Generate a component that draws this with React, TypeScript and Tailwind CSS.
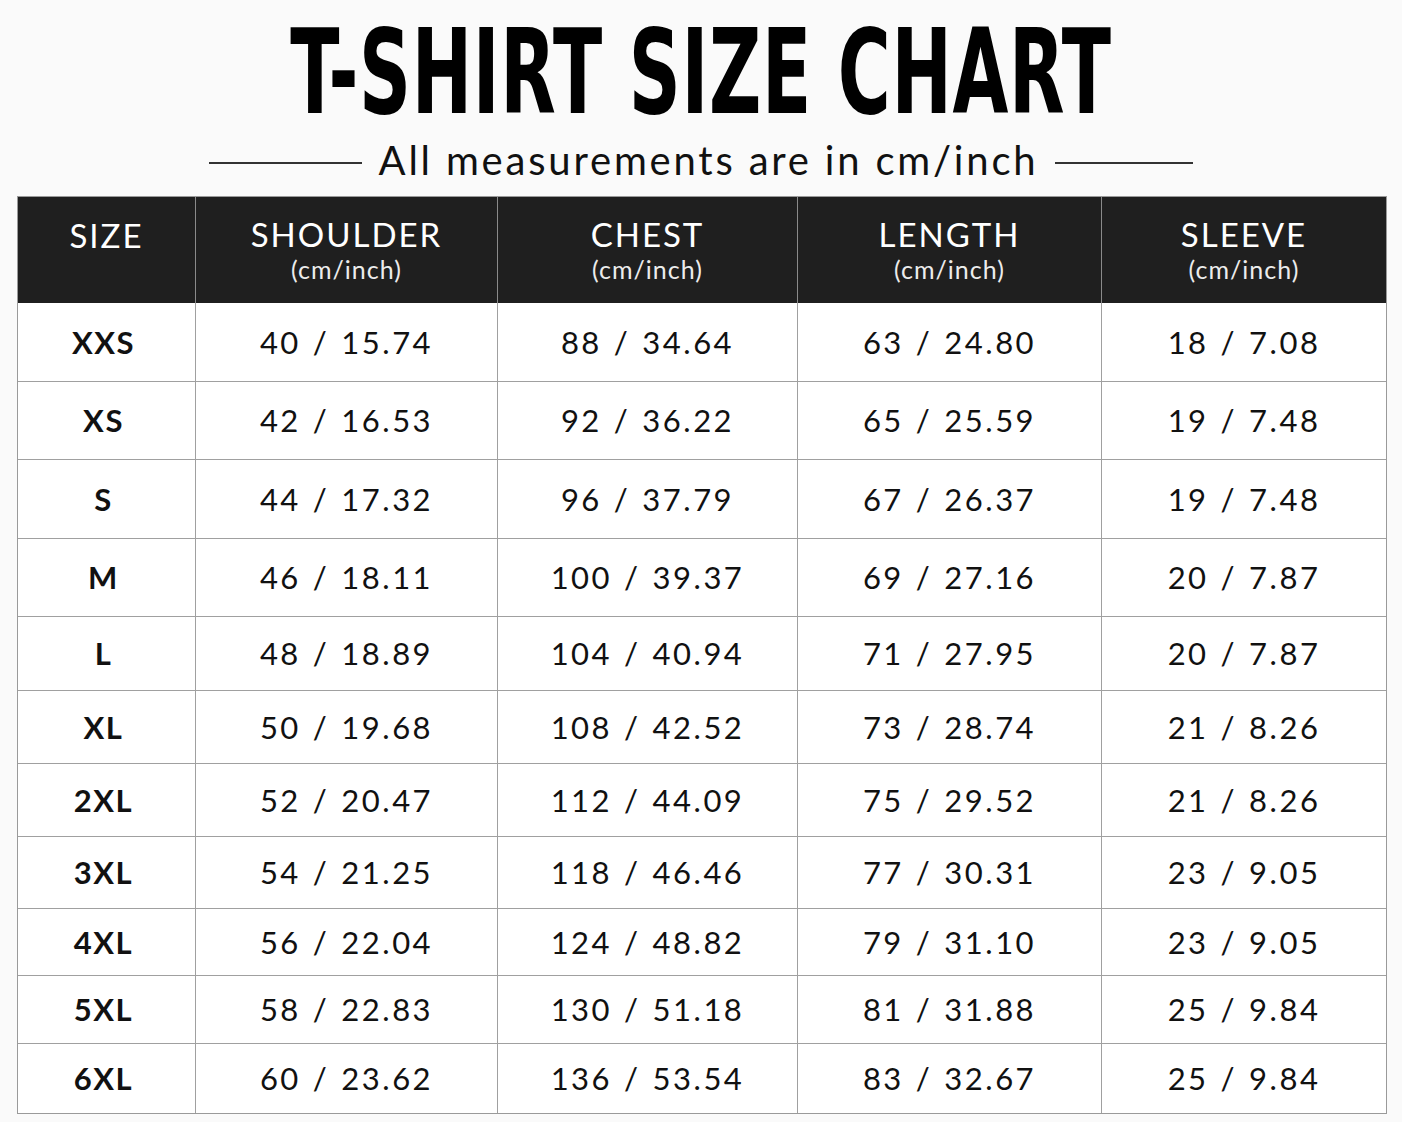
import React from "react";

type SizeRow = {
  size: string;
  shoulder: string;
  chest: string;
  length: string;
  sleeve: string;
  h: string;
};

const rows: SizeRow[] = [
  { size: "XXS", shoulder: "40 / 15.74", chest: "88 / 34.64", length: "63 / 24.80", sleeve: "18 / 7.08", h: "h-[79px]" },
  { size: "XS", shoulder: "42 / 16.53", chest: "92 / 36.22", length: "65 / 25.59", sleeve: "19 / 7.48", h: "h-[78px]" },
  { size: "S", shoulder: "44 / 17.32", chest: "96 / 37.79", length: "67 / 26.37", sleeve: "19 / 7.48", h: "h-[79px]" },
  { size: "M", shoulder: "46 / 18.11", chest: "100 / 39.37", length: "69 / 27.16", sleeve: "20 / 7.87", h: "h-[78px]" },
  { size: "L", shoulder: "48 / 18.89", chest: "104 / 40.94", length: "71 / 27.95", sleeve: "20 / 7.87", h: "h-[74px]" },
  { size: "XL", shoulder: "50 / 19.68", chest: "108 / 42.52", length: "73 / 28.74", sleeve: "21 / 8.26", h: "h-[73px]" },
  { size: "2XL", shoulder: "52 / 20.47", chest: "112 / 44.09", length: "75 / 29.52", sleeve: "21 / 8.26", h: "h-[73px]" },
  { size: "3XL", shoulder: "54 / 21.25", chest: "118 / 46.46", length: "77 / 30.31", sleeve: "23 / 9.05", h: "h-[72px]" },
  { size: "4XL", shoulder: "56 / 22.04", chest: "124 / 48.82", length: "79 / 31.10", sleeve: "23 / 9.05", h: "h-[67px]" },
  { size: "5XL", shoulder: "58 / 22.83", chest: "130 / 51.18", length: "81 / 31.88", sleeve: "25 / 9.84", h: "h-[68px]" },
  { size: "6XL", shoulder: "60 / 23.62", chest: "136 / 53.54", length: "83 / 32.67", sleeve: "25 / 9.84", h: "h-[69px]" },
];

const headers = ["SHOULDER", "CHEST", "LENGTH", "SLEEVE"];

const Value = ({ text }: { text: string }) => {
  const [cm, inch] = text.split(" / ");
  return (
    <span className="tracking-[2.5px]">
      {cm}
      <span className="mx-[12px]">/</span>
      {inch}
    </span>
  );
};

export default function App() {
  return (
    <div className="w-[1402px] h-[1122px] bg-[#fafafa] text-[#111] font-['Lato','Open_Sans',sans-serif] overflow-hidden">
      <div className="flex justify-center pt-[4px]">
        <h1 className="font-['Liberation_Sans_Narrow','DejaVu_Sans_Condensed',sans-serif] font-bold text-[118px] leading-[136px] tracking-[1px] scale-x-[0.68] whitespace-nowrap text-black">
          T-SHIRT SIZE CHART
        </h1>
      </div>

      <div className="flex items-center justify-center gap-[17px] h-[40px]">
        <div className="w-[153px] h-[2px] mt-[6px] bg-[#333]" />
        <p className="text-[40px] leading-[40px] text-[#111] tracking-[2.8px]">All measurements are in cm/inch</p>
        <div className="w-[138px] h-[2px] mt-[6px] bg-[#333]" />
      </div>

      <div className="ml-[17px] mt-[16px] w-[1370px] border border-[#9a9a9a]">
        <div className="grid grid-cols-[178px_302px_300px_304px_284px] bg-[#1f1f1f] text-white h-[106px]">
          <div className="flex items-center justify-center border-r border-[#8a8a8a] text-[33px] tracking-[2px] pb-[28px]">
            SIZE
          </div>
          {headers.map((h, i) => (
            <div
              key={h}
              className={
                i < headers.length - 1
                  ? "flex flex-col items-center justify-center border-r border-[#8a8a8a]"
                  : "flex flex-col items-center justify-center"
              }
            >
              <span className="text-[33px] leading-[38px] tracking-[2px]">{h}</span>
              <span className="text-[25px] leading-[32px] text-[#ececec] tracking-[1px]">(cm/inch)</span>
            </div>
          ))}
        </div>

        {rows.map((r, idx) => (
          <div
            key={r.size}
            className={
              "grid grid-cols-[178px_302px_300px_304px_284px] bg-white text-[31px] " +
              r.h +
              (idx < rows.length - 1 ? " border-b border-[#a0a0a0]" : "")
            }
          >
            <div className="flex items-center justify-center pr-[6px] border-r border-[#a0a0a0] font-bold text-[31px] tracking-[1.5px]">
              {r.size}
            </div>
            <div className="flex items-center justify-center border-r border-[#a0a0a0]">
              <Value text={r.shoulder} />
            </div>
            <div className="flex items-center justify-center border-r border-[#a0a0a0]">
              <Value text={r.chest} />
            </div>
            <div className="flex items-center justify-center border-r border-[#a0a0a0]">
              <Value text={r.length} />
            </div>
            <div className="flex items-center justify-center">
              <Value text={r.sleeve} />
            </div>
          </div>
        ))}
      </div>
    </div>
  );
}
